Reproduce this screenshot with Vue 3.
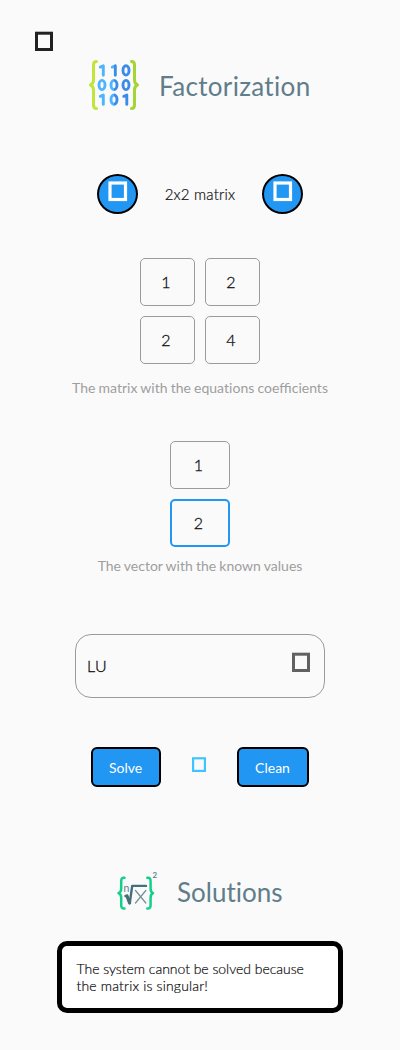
<script setup>
import { ref } from 'vue'

const matrix = ref([1, 2, 2, 4])
const vector = ref([1, 2])
const focused = ref(1)
const zeros = [[37, 10.4], [13, 25], [25, 25], [37, 25], [25, 39.6]]
const ones = [[13.5, 10.4], [25.5, 10.4], [13.5, 39.6], [37, 39.6]]
const onePoints = ([x, y]) => `${x - 2.2},${y - 3.3} ${x + 0.8},${y - 4.6} ${x + 0.8},${y + 4.8}`
</script>

<template>
  <main class="page">
    <svg class="menu" width="18" height="20" viewBox="0 0 18 20">
      <rect x="1.5" y="2.2" width="15" height="16.3" fill="none" stroke="#212121" stroke-width="3" />
    </svg>

    <header class="title first">
      <svg width="50" height="50" viewBox="0 0 50 50">
        <defs>
          <linearGradient id="digits" gradientUnits="userSpaceOnUse" x1="0" y1="0" x2="50" y2="0">
            <stop offset="0.5" stop-color="#4db5ff" />
            <stop offset="0.5" stop-color="#3b8be8" />
          </linearGradient>
        </defs>
        <g fill="none" stroke-width="3" stroke-linecap="round" stroke-linejoin="round">
          <path d="M7.5 1.5C4.8 1.5 4.5 3 4.5 5V20C4.5 23 4 24 1.5 25C4 26 4.5 27 4.5 30V45C4.5 47 4.8 48.5 7.5 48.5" stroke="#c0e63c" />
          <path d="M42.5 1.5C45.2 1.5 45.5 3 45.5 5V20C45.5 23 46 24 48.5 25C46 26 45.5 27 45.5 30V45C45.5 47 45.2 48.5 42.5 48.5" stroke="#a6d335" />
        </g>
        <g fill="none" stroke="url(#digits)" stroke-width="2.9" stroke-linecap="round" stroke-linejoin="round">
          <ellipse v-for="(p, i) in zeros" :key="'z' + i" :cx="p[0]" :cy="p[1]" rx="3" ry="4.6" />
          <polyline v-for="(p, i) in ones" :key="'o' + i" :points="onePoints(p)" />
        </g>
      </svg>
      <h1>Factorization</h1>
    </header>

    <section class="size">
      <button class="round">
        <svg width="20" height="21" viewBox="0 0 20 21"><rect x="2" y="2" width="15.5" height="16.5" fill="none" stroke="#fff" stroke-width="3.2" /></svg>
      </button>
      <span>2x2 matrix</span>
      <button class="round">
        <svg width="20" height="21" viewBox="0 0 20 21"><rect x="2" y="2" width="15.5" height="16.5" fill="none" stroke="#fff" stroke-width="3.2" /></svg>
      </button>
    </section>

    <section class="matrix">
      <div v-for="(v, i) in matrix" :key="i" class="cell">{{ v }}</div>
    </section>
    <p class="hint">The matrix with the equa<span class="plain">ti</span>ons coefficients</p>

    <section class="vector">
      <div v-for="(v, i) in vector" :key="i" class="cell" :class="{ focused: i === focused }">{{ v }}</div>
    </section>
    <p class="hint vhint">The vector with the known values</p>

    <div class="select">
      <span>LU</span>
      <svg width="18" height="20" viewBox="0 0 18 20">
        <rect x="1.5" y="2.2" width="15" height="16.3" fill="none" stroke="#616161" stroke-width="3" />
      </svg>
    </div>

    <section class="actions">
      <button class="btn solve">Solve</button>
      <svg width="14" height="16" viewBox="0 0 14 16">
        <rect x="1.1" y="1.3" width="11.8" height="12.6" fill="none" stroke="#40c4ff" stroke-width="2.2" />
      </svg>
      <button class="btn clean">Clean</button>
    </section>

    <header class="title second">
      <svg width="40" height="40" viewBox="0 0 40 40">
        <g fill="none" stroke-linecap="round" stroke-linejoin="round">
          <path d="M7.5 6.8C4.8 6.5 4.2 8 4.2 10.5V17.5C4.2 20.5 3.5 21.5 1.5 22.2C3.5 23 4.2 24 4.2 26.5V34C4.2 36.5 4.8 37.6 7.5 37.5" stroke="#12d08b" stroke-width="2.5" />
          <path d="M30.3 6.8C33 6.5 33.6 8 33.6 10.5V17.5C33.6 20.5 34.3 21.5 36 22.2C34.3 23 33.6 24 33.6 26.5V34C33.6 36.5 33 37.6 30.3 37.5" stroke="#12d08b" stroke-width="2.5" />
          <path d="M8.5 25H10L12.8 32L15.2 14.9H29" stroke="#467078" stroke-width="2.4" />
          <path d="M10 25L12.6 32" stroke="#467078" stroke-width="3.2" />
          <path d="M18.5 19.5L28.8 32M28.8 19.5L18.5 32" stroke="#78929b" stroke-width="1.3" />
        </g>
        <text class="root" x="6.5" y="20.7">n</text>
        <text class="power" x="35.5" y="6.5">2</text>
      </svg>
      <h1>Solutions</h1>
    </header>

    <div class="message">
      <div class="line one">The system cannot be solved because</div>
      <div class="line two">the matrix is singular!</div>
    </div>
  </main>
</template>

<style>
body {
  background: #fafafa;
}
</style>

<style scoped>
.page {
  box-sizing: border-box;
  width: 400px;
  height: 1050px;
  padding-top: 31px;
  overflow: hidden;
  display: flex;
  flex-direction: column;
  align-items: center;
  background: #fafafa;
  color: #0c0c0c;
  font-family: Lato, sans-serif;
}
svg {
  display: block;
  flex: none;
  overflow: visible;
}
.menu {
  align-self: flex-start;
  margin-left: 35px;
}
.title {
  display: flex;
  align-items: center;
}
.title h1 {
  margin: 0;
  padding-top: 2px;
  font-size: 26px;
  line-height: 32px;
  font-weight: 400;
  color: #607d8b;
  white-space: nowrap;
  font-variant-ligatures: none;
}
.first {
  align-self: flex-start;
  margin: 9px 0 0 89px;
  gap: 20px;
}
.first h1 {
  letter-spacing: 0.33px;
}
.size {
  display: flex;
  align-items: center;
  justify-content: space-between;
  width: 206px;
  margin-top: 64px;
  font-size: 15px;
  font-weight: 300;
}
.size span {
  letter-spacing: 0.2px;
  -webkit-text-stroke: 0.2px #111;
}
.round {
  box-sizing: border-box;
  width: 41px;
  height: 40px;
  padding: 5px 0 0 9px;
  display: flex;
  align-items: flex-start;
  border: 2px solid #000;
  border-radius: 50%;
  background: #2196f3;
}
.matrix {
  display: grid;
  grid-template-columns: 55px 55px;
  gap: 10px;
  margin-top: 44px;
}
.cell {
  box-sizing: border-box;
  height: 48px;
  padding: 0 3px 2px 0;
  display: flex;
  align-items: center;
  justify-content: center;
  border: 1px solid #9b9b9b;
  border-radius: 5px;
  font-size: 16px;
  font-weight: 300;
  -webkit-text-stroke: 0.3px #111;
}
.hint {
  margin: 15px 0 0;
  font-size: 14px;
  line-height: 17px;
  word-spacing: -0.4px;
  color: #9e9e9e;
  white-space: nowrap;
}
.plain {
  font-variant-ligatures: none;
}
.vector {
  display: grid;
  grid-template-columns: 60px;
  gap: 10px;
  margin-top: 45px;
}
.focused {
  border: 2px solid #2196f3;
}
.vhint {
  margin-top: 10px;
}
.select {
  box-sizing: border-box;
  width: 250px;
  height: 64px;
  margin-top: 60px;
  padding: 0 14px 0 11px;
  display: flex;
  align-items: center;
  justify-content: space-between;
  border: 1px solid #9b9b9b;
  border-radius: 16px;
  font-size: 16px;
  font-weight: 300;
}
.select span {
  padding-bottom: 2px;
  letter-spacing: 0.4px;
  -webkit-text-stroke: 0.3px #111;
}
.select svg {
  margin-bottom: 8px;
}
.actions {
  display: flex;
  align-items: center;
  justify-content: space-between;
  width: 218px;
  margin-top: 49px;
}
.actions svg {
  margin-bottom: 4px;
}
.btn {
  box-sizing: border-box;
  height: 40px;
  padding: 0 1px 0 0;
  border: 2px solid #000;
  border-radius: 6px;
  background: #2196f3;
  color: #fff;
  font: 400 14px Lato, sans-serif;
}
.solve {
  width: 70px;
}
.clean {
  width: 72px;
}
.second {
  align-self: flex-start;
  margin: 84px 0 0 117px;
  gap: 20px;
}
.root {
  font: 400 10.5px Lato, sans-serif;
  fill: #607d8b;
}
.power {
  font: 700 8px Lato, sans-serif;
  fill: #607d8b;
}
.message {
  box-sizing: border-box;
  width: 286px;
  height: 72px;
  margin-top: 30px;
  padding: 14px 0 0 14.5px;
  border: 5px solid #000;
  border-radius: 10px;
  background: #fff;
  font-size: 14px;
  line-height: 17px;
  font-weight: 300;
  -webkit-text-stroke: 0.2px #111;
}
.line {
  white-space: nowrap;
}
.one {
  letter-spacing: -0.03px;
}
.two {
  letter-spacing: 0.17px;
}
</style>
